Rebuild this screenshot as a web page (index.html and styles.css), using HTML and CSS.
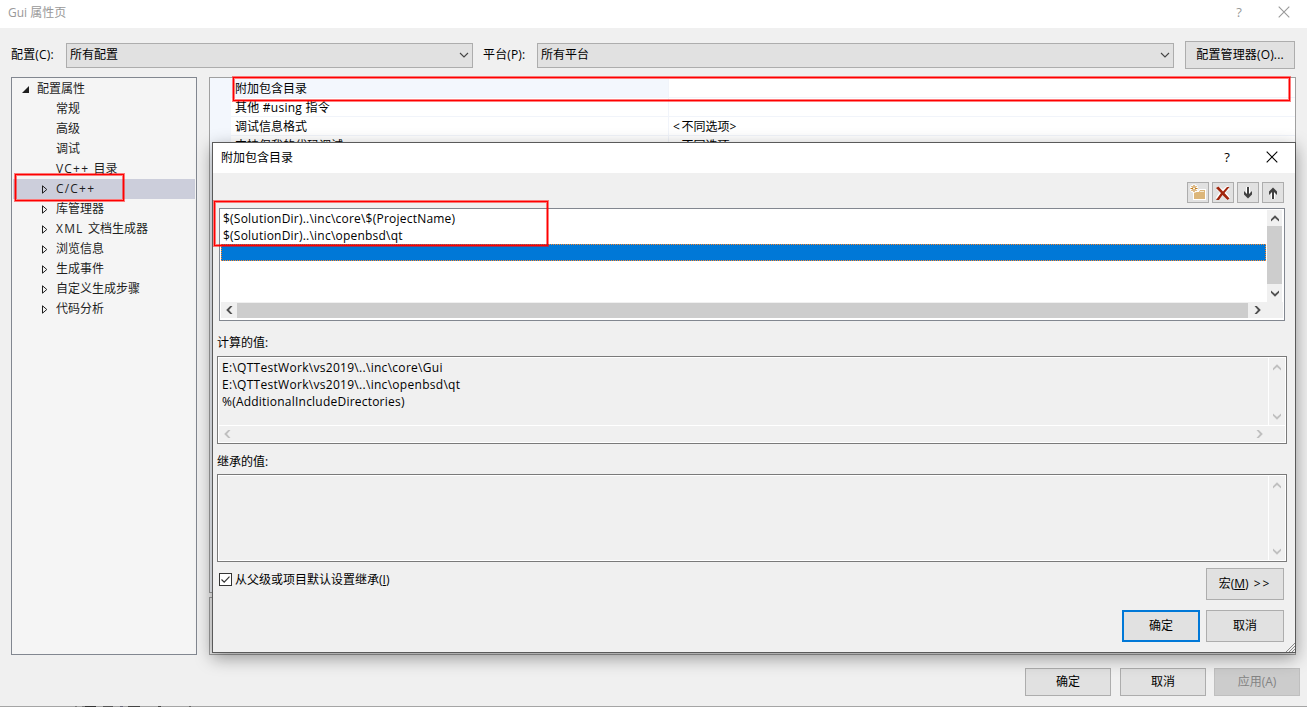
FILE: index.html
```
<!DOCTYPE html>
<html lang="zh-CN">
<head>
    <meta charset="UTF-8">
    <meta name="viewport" content="width=device-width, initial-scale=1.0">
    <title>Gui 属性页</title>
    <link rel="stylesheet" href="styles.css">
</head>
<body>
    <svg width="0" height="0" class="defs">
        <defs>
            <symbol id="chevron" viewBox="0 0 10 6"><path d="M1 1l4 4 4-4" fill="none" stroke="currentColor" stroke-width="1.1"/></symbol>
            <symbol id="arrow-up" viewBox="0 0 8 7"><path d="M0 6.5V4.2L4 .2l4 4v2.3L4 3z" fill="currentColor"/></symbol>
            <symbol id="arrow-down" viewBox="0 0 8 7"><path d="M0 .5v2.3l4 4 4-4V.5L4 4z" fill="currentColor"/></symbol>
            <symbol id="arrow-left" viewBox="0 0 7 8"><path d="M6.5 0H4.2l-4 4 4 4h2.3L3 4z" fill="currentColor"/></symbol>
            <symbol id="arrow-right" viewBox="0 0 7 8"><path d="M.5 0h2.3l4 4-4 4H.5L4 4z" fill="currentColor"/></symbol>
            <symbol id="close" viewBox="0 0 12 12"><path d="M.7.7l10.6 10.6M11.3.7L.7 11.3" fill="none" stroke="currentColor" stroke-width="1.1"/></symbol>
            <symbol id="expand" viewBox="0 0 6 9"><path d="M.5 .8v7.4L4.8 4.5z" fill="none" stroke="#1e1e1e"/></symbol>
        </defs>
    </svg>

    <div class="window">
        <div class="titlebar">
            <span class="title">Gui 属性页</span>
            <span class="help">?</span>
            <svg class="close"><use href="#close"/></svg>
        </div>

        <div class="config-bar">
            <span class="label-config">配置(C):</span>
            <div class="combo combo-config">所有配置<svg><use href="#chevron"/></svg></div>
            <span class="label-platform">平台(P):</span>
            <div class="combo combo-platform">所有平台<svg><use href="#chevron"/></svg></div>
            <button class="btn btn-manager">配置管理器(O)...</button>
        </div>

        <div class="content">
            <div class="tree">
                <div class="node root"><svg><path d="M7 0v7H0z" fill="#1e1e1e"/></svg>配置属性</div>
                <div class="node">常规</div>
                <div class="node">高级</div>
                <div class="node">调试</div>
                <div class="node"><span class="wide">VC++ </span>目录</div>
                <div class="node selected"><svg><use href="#expand"/></svg><span class="wide">C/C++</span></div>
                <div class="node"><svg><use href="#expand"/></svg>库管理器</div>
                <div class="node"><svg><use href="#expand"/></svg><span class="wide">XML </span>文档生成器</div>
                <div class="node"><svg><use href="#expand"/></svg>浏览信息</div>
                <div class="node"><svg><use href="#expand"/></svg>生成事件</div>
                <div class="node"><svg><use href="#expand"/></svg>自定义生成步骤</div>
                <div class="node"><svg><use href="#expand"/></svg>代码分析</div>
            </div>
            <div class="right">
                <div class="grid">
                    <div class="prop active"><span class="name">附加包含目录</span><span class="value"></span></div>
                    <div class="prop"><span class="name using">其他 #using 指令</span><span class="value"></span></div>
                    <div class="prop"><span class="name">调试信息格式</span><span class="value"><span class="angle">&lt;</span>不同选项<span class="angle">&gt;</span></span></div>
                    <div class="prop"><span class="name">支持仅我的代码调试</span><span class="value"><span class="angle">&lt;</span>不同选项<span class="angle">&gt;</span></span></div>
                </div>
                <div class="description"></div>
            </div>
        </div>

        <div class="footer">
            <button class="btn">确定</button>
            <button class="btn">取消</button>
            <button class="btn apply" disabled>应用(A)</button>
        </div>
        <div class="window-edge"><div class="behind"></div></div>
    </div>

    <div class="dialog">
        <div class="dialog-title">
            <span class="title">附加包含目录</span>
            <span class="help">?</span>
            <svg class="close"><use href="#close"/></svg>
        </div>

        <div class="toolbar">
            <button class="tool">
                <svg width="18" height="17" viewBox="0 0 18 17">
                    <path d="M4 7h5l1-2h7v11H4z" fill="#fff"/>
                    <path d="M5 8h5l1-2h5v9H5z" fill="#dcb67a"/>
                    <path d="M11 7.5h4" stroke="#f5e8d0"/>
                    <circle cx="5" cy="4.5" r="4.3" fill="#fff" opacity=".9"/>
                    <path d="M5 1v7M1.5 4.5h7M2.5 2l5 5M7.5 2l-5 5" stroke="#c27d1a"/>
                    <circle cx="5" cy="4.5" r="1" fill="#fff"/>
                </svg>
            </button>
            <button class="tool">
                <svg width="16" height="16" viewBox="0 0 16 16">
                    <path d="M2.5 3Q9 7 13.5 14M13.5 2.5Q6.5 7 2.5 14" fill="none" stroke="#fff" stroke-width="4"/>
                    <path d="M1 3l2.5-1.5L8 6.500l4-4.500h2.500L9.500 8l5 5.500-2 1.500-5-5L4 15H1l5-7z" fill="#a1260d"/>
                </svg>
            </button>
            <button class="tool">
                <svg width="12" height="14" viewBox="0 0 12 14">
                    <path d="M6 1v9" stroke="#fff" stroke-width="4"/>
                    <path d="M5 1h2v7l3-3v3.500l-4 4-4-4V5l3 3z" fill="#424242"/>
                </svg>
            </button>
            <button class="tool">
                <svg width="12" height="14" viewBox="0 0 12 14">
                    <path d="M6 4v9" stroke="#fff" stroke-width="4"/>
                    <path d="M5 13h2V6l3 3V5.500l-4-4-4 4V9l3-3z" fill="#424242"/>
                </svg>
            </button>
        </div>

        <div class="list">
            <div class="list-main">
                <div class="rows">
                    <div class="row">$(SolutionDir)..\inc\core\$(ProjectName)</div>
                    <div class="row">$(SolutionDir)..\inc\openbsd\qt</div>
                    <div class="row current"></div>
                </div>
                <div class="vscroll">
                    <svg class="v"><use href="#arrow-up"/></svg>
                    <div class="thumb"></div>
                    <svg class="v"><use href="#arrow-down"/></svg>
                </div>
            </div>
            <div class="hscroll">
                <svg class="h"><use href="#arrow-left"/></svg>
                <div class="thumb"></div>
                <svg class="h"><use href="#arrow-right"/></svg>
            </div>
        </div>

        <div class="caption">计算的值:</div>
        <div class="readonly">
            <div class="list-main">
                <div class="rows">
                    <div class="row path">E:\QTTestWork\vs2019\..\inc\core\Gui</div>
                    <div class="row path">E:\QTTestWork\vs2019\..\inc\openbsd\qt</div>
                    <div class="row">%(AdditionalIncludeDirectories)</div>
                </div>
                <div class="vscroll">
                    <svg class="v"><use href="#arrow-up"/></svg>
                    <svg class="v"><use href="#arrow-down"/></svg>
                </div>
            </div>
            <div class="hscroll">
                <svg class="h"><use href="#arrow-left"/></svg>
                <svg class="h"><use href="#arrow-right"/></svg>
            </div>
        </div>

        <div class="caption inherited">继承的值:</div>
        <div class="readonly">
            <div class="list-main">
                <div class="rows"></div>
                <div class="vscroll">
                    <svg class="v"><use href="#arrow-up"/></svg>
                    <svg class="v"><use href="#arrow-down"/></svg>
                </div>
            </div>
        </div>

        <div class="options">
            <label class="inherit">
                <svg width="13" height="13"><rect x=".5" y=".5" width="12" height="12" fill="#fff" stroke="#333"/><path d="M2.5 6.5l2.7 2.7 5.3-5.5" fill="none" stroke="#333" stroke-width="1.2"/></svg>
                <span>从父级或项目默认设置继承(<u>I</u>)</span>
            </label>
            <button class="btn macro">宏(<u>M</u>) <span class="more">&gt;&gt;</span></button>
        </div>
        <div class="actions">
            <button class="btn default">确定</button>
            <button class="btn">取消</button>
        </div>
        <svg class="grip" width="9" height="9"><path d="M0 9l9-9M3 9l6-6M6 9l3-3" stroke="#8a8a8a"/></svg>
    </div>

    <div class="mark mark-property"></div>
    <div class="mark mark-tree"></div>
    <div class="mark mark-paths"></div>
</body>
</html>
```
FILE: styles.css
```
* {
    box-sizing: border-box;
}

body {
    margin: 0;
    width: 1307px;
    height: 707px;
    overflow: hidden;
    position: relative;
    font-family: "Open Sans", "Noto Sans CJK SC", sans-serif;
    font-size: 12px;
    color: #000;
    background-color: #f0f0f0;
}

svg {
    display: block;
    flex: none;
}

.defs {
    position: absolute;
}

/* Main window */
.window {
    height: 707px;
    display: flex;
    flex-direction: column;
}

.titlebar {
    height: 28px;
    background-color: #fff;
    color: #999;
    display: flex;
    align-items: center;
    padding: 0 17px 4px 8px;
}

.title {
    flex: 1;
}

.help {
    width: 8px;
    text-align: center;
    font-size: 13px;
}

.close {
    width: 12px;
    height: 12px;
    margin-left: 35px;
}

.config-bar {
    height: 49px;
    padding: 13px 12px 8px 11px;
    display: flex;
    align-items: center;
}

.label-config,
.label-platform {
    letter-spacing: 0.15px;
    padding-bottom: 2px;
}

.label-config {
    width: 55px;
}

.label-platform {
    width: 54px;
    margin-left: 10px;
}

.combo {
    height: 25px;
    border: 1px solid #adadad;
    background-color: #e1e1e1;
    display: flex;
    align-items: center;
    justify-content: space-between;
    padding: 0 3px 2px;
}

.combo svg {
    width: 10px;
    height: 6px;
    color: #444;
    margin-top: 2px;
}

.combo-config {
    width: 407px;
}

.combo-platform {
    width: 637px;
}

.btn {
    font-family: inherit;
    font-size: 12px;
    color: #000;
    border: 1px solid #adadad;
    background-color: #e1e1e1;
    border-radius: 0;
    padding: 0 0 2px;
    display: flex;
    align-items: center;
    justify-content: center;
    white-space: pre;
}

.btn-manager {
    width: 110px;
    height: 28px;
    margin-left: 11px;
    letter-spacing: 0.15px;
}

.content {
    display: flex;
    height: 578px;
    padding: 0 11px;
    gap: 12px;
}

.tree {
    width: 186px;
    border: 1px solid #828790;
    background-color: #f5f5f5;
    padding: 1px;
    color: #1e1e1e;
}

.node {
    height: 20px;
    display: flex;
    align-items: center;
    padding: 0 0 2px 43px;
    white-space: pre;
}

.node svg {
    width: 6px;
    height: 9px;
    margin: 2px 8px 0 -14px;
}

.node.root {
    padding-left: 24px;
}

.node.root svg {
    width: 7px;
    height: 7px;
    margin: 2px 8px 0 -15px;
}

.node.selected {
    background-color: #cccedb;
}

.wide {
    letter-spacing: 1.2px;
}

.right {
    width: 1087px;
    display: flex;
    flex-direction: column;
    gap: 4px;
}

.grid {
    height: 516px;
    border: 1px solid #a0a0a0;
    background: linear-gradient(90deg, #f3f7fd 21px, #fff 21px);
    padding: 1px 0 0 21px;
}

.description {
    flex: 1;
    border: 1px solid #a0a0a0;
}

.prop {
    height: 19px;
    display: flex;
    line-height: 20px;
    border-bottom: 1px solid #f1f4fa;
}

.name {
    width: 438px;
    padding-left: 4px;
    border-right: 1px solid #f1f4fa;
}

.using {
    letter-spacing: 0.25px;
}

.active .name {
    background-color: #f3f7fd;
}

.value {
    flex: 1;
    padding-left: 4px;
}

.angle {
    letter-spacing: 1.5px;
}

.footer {
    display: flex;
    justify-content: flex-end;
    gap: 9px;
    padding: 13px 7px 10px 0;
}

.footer .btn {
    width: 86px;
    height: 28px;
}

.footer .apply {
    margin-left: -1px;
    color: #838383;
    border-color: #bfbfbf;
    background-color: #ccc;
}

.window-edge {
    height: 1px;
    padding-left: 75px;
    background-color: #a5a5a5;
}

/* Tops of the glyphs that show through below the window */
.behind {
    width: 118px;
    height: 1px;
    background: linear-gradient(90deg, #777 2px, #a5a5a5 2px 7px, #777 7px 10px, #333 10px 21px, #a5a5a5 21px 28px, #555 28px 38px, #a5a5a5 38px 45px, #667 45px 48px, #a5a5a5 48px 53px, #444 53px 65px, #a5a5a5 65px 83px, #444 83px 86px, #a5a5a5 86px 114px, #666 114px 116px, #a5a5a5 116px);
}

/* Directory editor on top of the main window */
.dialog {
    position: absolute;
    left: 212px;
    top: 142px;
    width: 1084px;
    height: 511px;
    border: 1px solid #5a5a5a;
    background-color: #f0f0f0;
    box-shadow: 0 5px 16px rgba(0, 0, 0, 0.38);
}

.dialog-title {
    height: 30px;
    display: flex;
    align-items: center;
    background-color: #fff;
    padding: 0 17px 2px 8px;
}

.toolbar {
    display: flex;
    justify-content: flex-end;
    gap: 3px;
    padding: 9px 11px 5px 0;
}

.tool {
    width: 22px;
    height: 21px;
    padding: 0;
    border: 1px solid #adadad;
    background-color: #e1e1e1;
    display: flex;
    align-items: center;
    justify-content: center;
}

.list,
.readonly {
    display: flex;
    flex-direction: column;
}

.list {
    height: 113px;
    margin: 0 10px 0 6px;
    border: 1px solid #828790;
    background-color: #fff;
    padding: 1px 1px 2px;
}

.list-main {
    flex: 1;
    display: flex;
}

.rows {
    flex: 1;
}

.row {
    height: 17px;
    line-height: 17px;
    padding-left: 2px;
    white-space: pre;
    letter-spacing: 0.22px;
}

.row.path {
    letter-spacing: 0.29px;
}

/* Selected row with a dotted focus rectangle, one dot every other pixel */
.row.current {
    background:
        repeating-linear-gradient(90deg, #ff8728 0 1px, #0078d7 1px 2px) top / 100% 1px no-repeat,
        repeating-linear-gradient(90deg, #ff8728 0 1px, #0078d7 1px 2px) bottom / 100% 1px no-repeat,
        repeating-linear-gradient(#ff8728 0 1px, #0078d7 1px 2px) left / 1px 100% no-repeat,
        repeating-linear-gradient(#ff8728 0 1px, #0078d7 1px 2px) right / 1px 100% no-repeat,
        #0078d7;
}

.vscroll {
    width: 17px;
    display: flex;
    flex-direction: column;
    align-items: center;
    justify-content: space-between;
    background-color: #f0f0f0;
    border-left: 1px solid #fff;
    padding: 6px 0 5px;
    color: #505050;
}

.v {
    width: 8px;
    height: 7px;
}

.h {
    width: 7px;
    height: 8px;
}

.hscroll {
    height: 16px;
    display: flex;
    align-items: center;
    justify-content: space-between;
    background-color: #f0f0f0;
    color: #505050;
    padding: 0 22px 0 5px;
}

.list .vscroll {
    width: 16px;
    margin-right: 1px;
    padding: 5px 0;
}

.list .vscroll .thumb {
    width: 15px;
    height: 58px;
    margin-top: -2px;
    background-color: #cdcdcd;
}

.list .hscroll .thumb {
    flex: 1;
    height: 15px;
    margin: 0 6px 0 4px;
    background-color: #cdcdcd;
}

.caption {
    height: 35px;
    padding: 13px 0 0 4px;
    line-height: 17px;
}

.caption.inherited {
    height: 30px;
    padding-top: 9px;
}

.readonly {
    height: 88px;
    margin: 0 8px 0 4px;
    border: 1px solid #7a7a7a;
    box-shadow: inset 0 0 0 1px #fff;
    padding: 1px;
}

.readonly .rows {
    padding: 1px 0 0 1px;
}

.readonly .vscroll,
.readonly .hscroll {
    color: #bfbfbf;
}

.readonly .hscroll {
    height: 17px;
    border-top: 1px solid #fff;
}

.options {
    display: flex;
    justify-content: space-between;
    padding: 6px 11px 0 6px;
}

.inherit {
    height: 23px;
    display: flex;
    align-items: center;
    gap: 3px;
}

.inherit span {
    padding-bottom: 1px;
}

.dialog .btn {
    width: 78px;
    height: 32px;
}

.more {
    letter-spacing: 2px;
    margin-left: 2px;
}

.actions {
    display: flex;
    justify-content: flex-end;
    gap: 6px;
    padding: 10px 11px 0 0;
}

.dialog .btn.default {
    border: 2px solid #0078d7;
}

.grip {
    position: absolute;
    right: 0;
    bottom: 0;
}

/* Red highlight frames */
.mark {
    position: absolute;
    border: 1px solid #f00;
    box-shadow: 0 0 0 1px rgba(255, 0, 0, 0.5), inset 0 0 0 1px rgba(255, 0, 0, 0.5);
}

.mark-property {
    left: 233px;
    top: 77px;
    width: 1057px;
    height: 24px;
}

.mark-tree {
    left: 15px;
    top: 174px;
    width: 109px;
    height: 27px;
}

.mark-paths {
    left: 214px;
    top: 201px;
    width: 334px;
    height: 45px;
}
```
